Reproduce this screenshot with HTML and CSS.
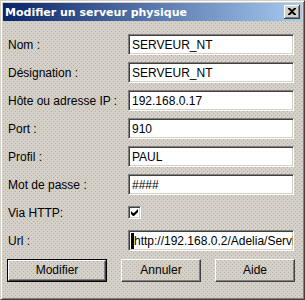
FILE: index.html
```html
<!DOCTYPE html>
<html lang="fr">
<head>
  <meta charset="UTF-8">
  <title>Modifier un serveur physique</title>
  <link rel="stylesheet" href="styles.css">
</head>
<body>
  <div class="window">
    <div class="titlebar">
      <span class="title">Modifier un serveur physique</span>
      <span class="close">
        <svg width="8" height="7" viewBox="0 0 8 7">
          <path d="M0 0h2l2 2 2-2h2v1l-3 2.5 3 2.5v1h-2l-2-2-2 2h-2v-1l3-2.5-3-2.5z" fill="#000"/>
        </svg>
      </span>
    </div>
    <div class="form">
      <label>Nom :</label>
      <div class="field">SERVEUR_NT</div>
      <label>Désignation :</label>
      <div class="field">SERVEUR_NT</div>
      <label>Hôte ou adresse IP :</label>
      <div class="field">192.168.0.17</div>
      <label>Port :</label>
      <div class="field">910</div>
      <label>Profil :</label>
      <div class="field">PAUL</div>
      <label>Mot de passe :</label>
      <div class="field">####</div>
      <label>Via HTTP:</label>
      <div class="check-row">
        <span class="checkbox">
          <svg width="7" height="7" viewBox="0 0 7 7">
            <path d="M0 2v3l2 2h1l4-4v-3l-4 4h-1z" fill="#000"/>
          </svg>
        </span>
      </div>
      <label>Url :</label>
      <div class="field focused"><span class="caret"></span><span class="clip">http://192.168.0.2/Adelia/Servlet</span></div>
    </div>
    <div class="buttons">
      <div class="btn default"><span>Modifier</span></div>
      <div class="btn"><span>Annuler</span></div>
      <div class="btn"><span>Aide</span></div>
    </div>
  </div>
</body>
</html>
```

FILE: styles.css
```css
html, body {
  margin: 0;
  padding: 0;
  background: #d4d0c8;
}

/* fond gris pointillé façon Windows */
.window,
.btn span {
  background-color: #d4d0c8;
  background-image:
    conic-gradient(from 270deg at 1px 1px, #b4b0a8 25%, transparent 0),
    conic-gradient(from 270deg at 1px 1px, #b4b0a8 25%, transparent 0);
  background-size: 4px 4px, 4px 4px;
  background-position: 0 0, 2px 2px;
}

.window {
  width: 305px;
  height: 300px;
  box-sizing: border-box;
  border-top: 1px solid #d4d0c8;
  border-left: 1px solid #d4d0c8;
  border-right: 1px solid #404040;
  border-bottom: 1px solid #404040;
  box-shadow: inset 1px 1px 0 #ffffff, inset -1px -1px 0 #808080;
  padding: 2px;
  font-family: "Liberation Sans", Arial, sans-serif;
  font-size: 12px;
  color: #000;
}

.titlebar {
  height: 18px;
  background: linear-gradient(to right, #0a246a, #a6caf0);
  display: flex;
  align-items: center;
  justify-content: space-between;
  padding: 0 2px 0 2px;
}
.title {
  color: #fff;
  font-family: "DejaVu Sans", sans-serif;
  font-weight: bold;
  font-size: 11px;
}
.close {
  width: 16px;
  height: 14px;
  box-sizing: border-box;
  background: #d4d0c8;
  border-right: 1px solid #404040;
  border-bottom: 1px solid #404040;
  box-shadow: inset 1px 1px 0 #fff, inset -1px -1px 0 #808080;
  display: flex;
  align-items: center;
  justify-content: center;
}

.form {
  display: grid;
  grid-template-columns: 120px 166px;
  grid-auto-rows: 21px;
  row-gap: 7px;
  margin: 13px 0 0 5px;
  align-items: center;
}
.form label {
  padding-top: 1px;
}
.field {
  height: 21px;
  box-sizing: border-box;
  background: #fff;
  border-top: 1px solid #808080;
  border-left: 1px solid #808080;
  border-right: 1px solid #fff;
  border-bottom: 1px solid #fff;
  box-shadow: inset 1px 1px 0 #404040, inset -1px -1px 0 #d4d0c8;
  padding: 3px 0 0 3px;
  white-space: nowrap;
  overflow: hidden;
  line-height: 14px;
}
.field.focused {
  padding-left: 2px;
  display: flex;
  align-items: flex-start;
}
.caret {
  width: 3px;
  height: 16px;
  margin-top: -1px;
  background: #000;
  flex: none;
}
.clip {
  overflow: hidden;
  min-width: 0;
}

.check-row {
  display: flex;
  align-items: center;
  height: 21px;
}
.checkbox {
  width: 13px;
  height: 13px;
  box-sizing: border-box;
  background: #fff;
  border-top: 1px solid #808080;
  border-left: 1px solid #808080;
  border-right: 1px solid #fff;
  border-bottom: 1px solid #fff;
  box-shadow: inset 1px 1px 0 #404040, inset -1px -1px 0 #d4d0c8;
  display: flex;
  align-items: center;
  justify-content: center;
}

.buttons {
  display: flex;
  gap: 14px;
  margin: 8px 0 0 4px;
}
.btn {
  width: 80px;
  height: 23px;
  box-sizing: border-box;
  border-top: 1px solid #fff;
  border-left: 1px solid #fff;
  border-right: 1px solid #404040;
  border-bottom: 1px solid #404040;
  display: flex;
}
.btn span {
  flex: 1;
  display: flex;
  align-items: center;
  justify-content: center;
  box-shadow: inset -1px -1px 0 #808080;
  padding-bottom: 1px;
}
.btn.default {
  width: 100px;
  border: 1px solid #000;
}
.btn.default span {
  border-top: 1px solid #fff;
  border-left: 1px solid #fff;
  border-right: 1px solid #404040;
  border-bottom: 1px solid #404040;
}
```
